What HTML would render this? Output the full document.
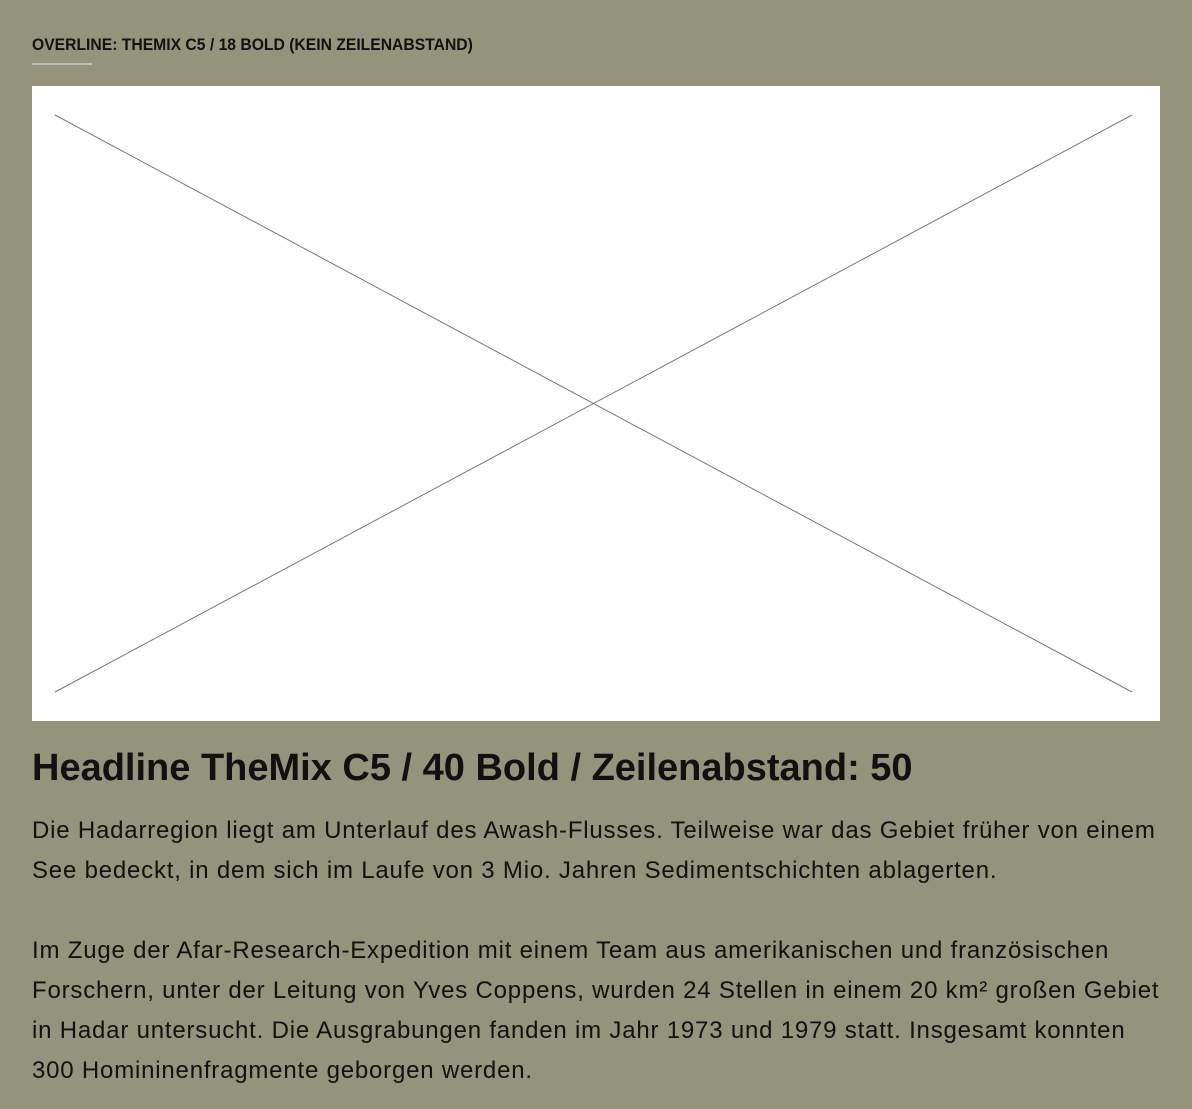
<!DOCTYPE html>
<html><head><meta charset="utf-8"><style>
html,body{margin:0;padding:0;}
body{width:1192px;height:1109px;background:#94937c;position:relative;overflow:hidden;font-family:"Liberation Sans",sans-serif;color:#111;}
.ov{position:absolute;left:32px;top:35px;font-size:17px;font-weight:bold;white-space:nowrap;transform-origin:left top;transform:scaleX(0.923);}
.rule{position:absolute;left:32px;top:63px;width:60px;height:2px;background:#b3bfb6;}
.img{position:absolute;left:32px;top:86px;width:1128px;height:635px;background:#fff;}
.h{position:absolute;left:32px;top:744px;font-size:38px;font-weight:bold;white-space:nowrap;line-height:48px;}
.p{position:absolute;left:32px;font-size:24px;line-height:40px;white-space:nowrap;letter-spacing:0.8px;}
</style></head><body>
<div class="ov">OVERLINE: THEMIX C5 / 18 BOLD (KEIN ZEILENABSTAND)</div>
<div class="rule"></div>
<div class="img"><svg width="1128" height="635" style="display:block"><line x1="23" y1="29" x2="1100" y2="606" stroke="#777" stroke-width="1"/><line x1="1100" y1="29" x2="23" y2="606" stroke="#777" stroke-width="1"/></svg></div>
<div class="h">Headline TheMix C5 / 40 Bold / Zeilenabstand: 50</div>
<div class="p" style="top:811px">Die Hadarregion liegt am Unterlauf des Awash-Flusses. Teilweise war das Gebiet früher von einem<br>See bedeckt, in dem sich im Laufe von 3 Mio. Jahren Sedimentschichten ablagerten.</div>
<div class="p" style="top:931px">Im Zuge der Afar-Research-Expedition mit einem Team aus amerikanischen und französischen<br>Forschern, unter der Leitung von Yves Coppens, wurden 24 Stellen in einem 20 km² großen Gebiet<br>in Hadar untersucht. Die Ausgrabungen fanden im Jahr 1973 und 1979 statt. Insgesamt konnten<br>300 Homininenfragmente geborgen werden.</div>
</body></html>
